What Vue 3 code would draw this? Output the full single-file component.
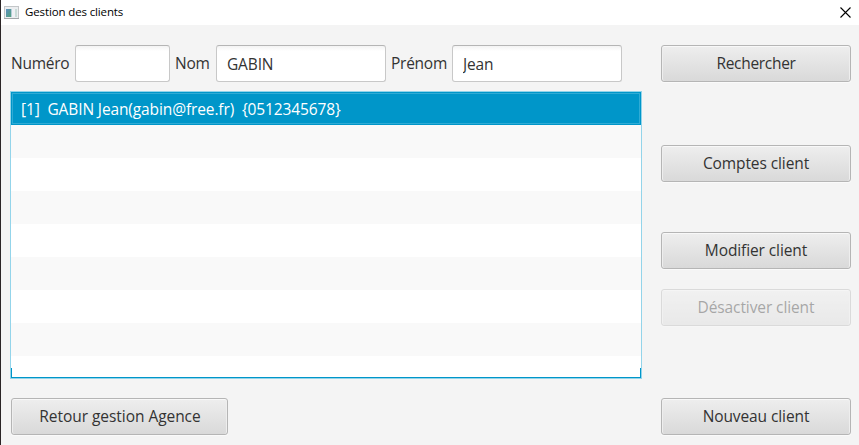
<script setup>
import { ref } from 'vue'

const numero = ref('')
const nom = ref('GABIN')
const prenom = ref('Jean')
const clients = ['[1]\u00a0 GABIN Jean(gabin@free.fr)\u00a0 {0512345678}', '', '', '', '', '', '', '', '']
const selected = ref(0)
</script>

<template>
  <div class="window">
    <header class="titlebar">
      <svg class="app-icon" width="15" height="13" viewBox="0 0 15 13">
        <defs>
          <linearGradient id="pane" x1="0" y1="0" x2="1" y2="1">
            <stop offset="0" stop-color="#5a8fc0" />
            <stop offset="1" stop-color="#55a37c" />
          </linearGradient>
        </defs>
        <rect x="0.5" y="0.5" width="14" height="12" fill="#eceef0" stroke="#c3c6c8" />
        <rect x="2" y="3" width="5" height="8" fill="url(#pane)" />
        <rect x="7" y="3" width="1" height="8" fill="#b5cdd8" />
        <rect x="8" y="3" width="3" height="8" fill="#f0f1f5" />
        <rect x="11" y="3" width="2" height="8" fill="#c9dcd8" />
        <path d="M0 12.5H15" stroke="#a3a7aa" />
      </svg>
      <span class="title">Gestion des clients</span>
      <svg class="close" width="11" height="11" viewBox="0 0 11 11">
        <path d="M0.5 0.5L10.5 10.5M10.5 0.5L0.5 10.5" stroke="#000" stroke-width="1.1" fill="none" />
      </svg>
    </header>

    <div class="body">
      <main class="main">
        <form class="search" @submit.prevent>
          <label class="l-num" for="numero">Numéro</label>
          <input id="numero" v-model="numero" class="field short" type="text" />
          <label class="l-nom" for="nom">Nom</label>
          <input id="nom" v-model="nom" class="field" type="text" />
          <label class="l-pre" for="prenom">Prénom</label>
          <input id="prenom" v-model="prenom" class="field" type="text" />
        </form>
        <div class="list">
          <div class="cells">
            <div
              v-for="(client, i) in clients"
              :key="i"
              class="cell"
              :class="{ selected: i === selected }"
            >{{ client }}</div>
          </div>
        </div>
        <button class="btn back">Retour gestion Agence</button>
      </main>

      <aside class="actions">
        <button class="btn find">Rechercher</button>
        <button class="btn accounts">Comptes client</button>
        <button class="btn edit">Modifier client</button>
        <button class="btn disable" disabled>Désactiver client</button>
        <button class="btn create">Nouveau client</button>
      </aside>
    </div>
  </div>
</template>

<style>
body {
  background: #f4f4f4;
  overflow: hidden;
}
</style>

<style scoped>
.window {
  box-sizing: border-box;
  width: 859px;
  height: 445px;
  border-left: 1px solid #2b2526;
  background: #f4f4f4;
  color: #333;
  font-family: "Open Sans", "Noto Sans", sans-serif;
  font-size: 15.5px;
}
.titlebar {
  display: flex;
  align-items: center;
  height: 25px;
  padding: 0 8px 0 3px;
  box-sizing: border-box;
  background: #fff;
  color: #000;
}
.title {
  margin-left: 6px;
  font-size: 11.5px;
  line-height: 23px;
  padding-bottom: 2px;
  letter-spacing: -0.13px;
  white-space: nowrap;
}
.close {
  margin-left: auto;
}
.body {
  display: flex;
  justify-content: space-between;
  height: 420px;
  box-sizing: border-box;
  padding: 20px 7px 10px 9px;
}
.main {
  display: flex;
  flex-direction: column;
  width: 632px;
}
.search {
  display: flex;
  align-items: center;
  height: 37px;
  padding-left: 1px;
}
label {
  flex: none;
  box-sizing: border-box;
  line-height: 37px;
  letter-spacing: -0.25px;
  white-space: nowrap;
}
.l-num { width: 64px; }
.l-nom { width: 46px; padding-left: 5px; }
.l-pre { width: 66px; padding-left: 5px; }
.field {
  flex: none;
  box-sizing: border-box;
  width: 170px;
  height: 37px;
  margin: 0;
  padding: 0 10px;
  border: 1px solid #c8c8c8;
  border-top-color: #b5b5b5;
  border-radius: 3px;
  outline: none;
  background: linear-gradient(#f3f3f3, #fff 5px);
  color: #333;
  font: inherit;
  letter-spacing: -0.15px;
}
.short { width: 95px; }
.list {
  box-sizing: border-box;
  height: 288px;
  margin-top: 9px;
  padding-bottom: 1px;
  border: 1px solid #93d4ea;
  background:
    linear-gradient(#0096c9, #0096c9) left bottom / 1px 10px no-repeat,
    linear-gradient(#0096c9, #0096c9) right bottom / 1px 10px no-repeat,
    linear-gradient(#0096c9, #0096c9) left bottom / 100% 1px no-repeat,
    #fff;
}
.cells {
  height: 285px;
  overflow: hidden;
}
.cell {
  box-sizing: border-box;
  height: 33px;
  padding-left: 10px;
  line-height: 33px;
  letter-spacing: -0.12px;
  white-space: pre;
}
.cell:nth-child(even) {
  background: #f9f9f9;
}
.cell.selected {
  padding-left: 9px;
  border: 1px solid #0096c9;
  background: #0096c9;
  box-shadow: inset 0 0 0 1px #30abd5;
  color: #fff;
  line-height: 32px;
}
.btn {
  display: block;
  flex: none;
  box-sizing: border-box;
  width: 190px;
  height: 37px;
  margin: 0;
  padding: 0;
  border: 1px solid #b5b5b5;
  border-radius: 3px;
  background: linear-gradient(#eee, #d9d9d9);
  box-shadow: inset 0 1px #f8f8f8, inset 1px 0 #eee, inset -1px 0 #eee, 0 1px #fafafa;
  color: #333;
  font: inherit;
  line-height: 35px;
  letter-spacing: -0.1px;
  text-align: center;
}
.btn:disabled {
  opacity: 0.4;
}
.back {
  width: 217px;
  margin: 19px 0 0 1px;
  padding-left: 1px;
  letter-spacing: -0.05px;
}
.actions {
  display: flex;
  flex-direction: column;
  width: 190px;
  margin-right: 1px;
}
.find { letter-spacing: -0.3px; }
.accounts { margin-top: 63px; }
.edit { margin-top: 50px; }
.disable { margin-top: 20px; }
.create { margin-top: 72px; }
</style>
